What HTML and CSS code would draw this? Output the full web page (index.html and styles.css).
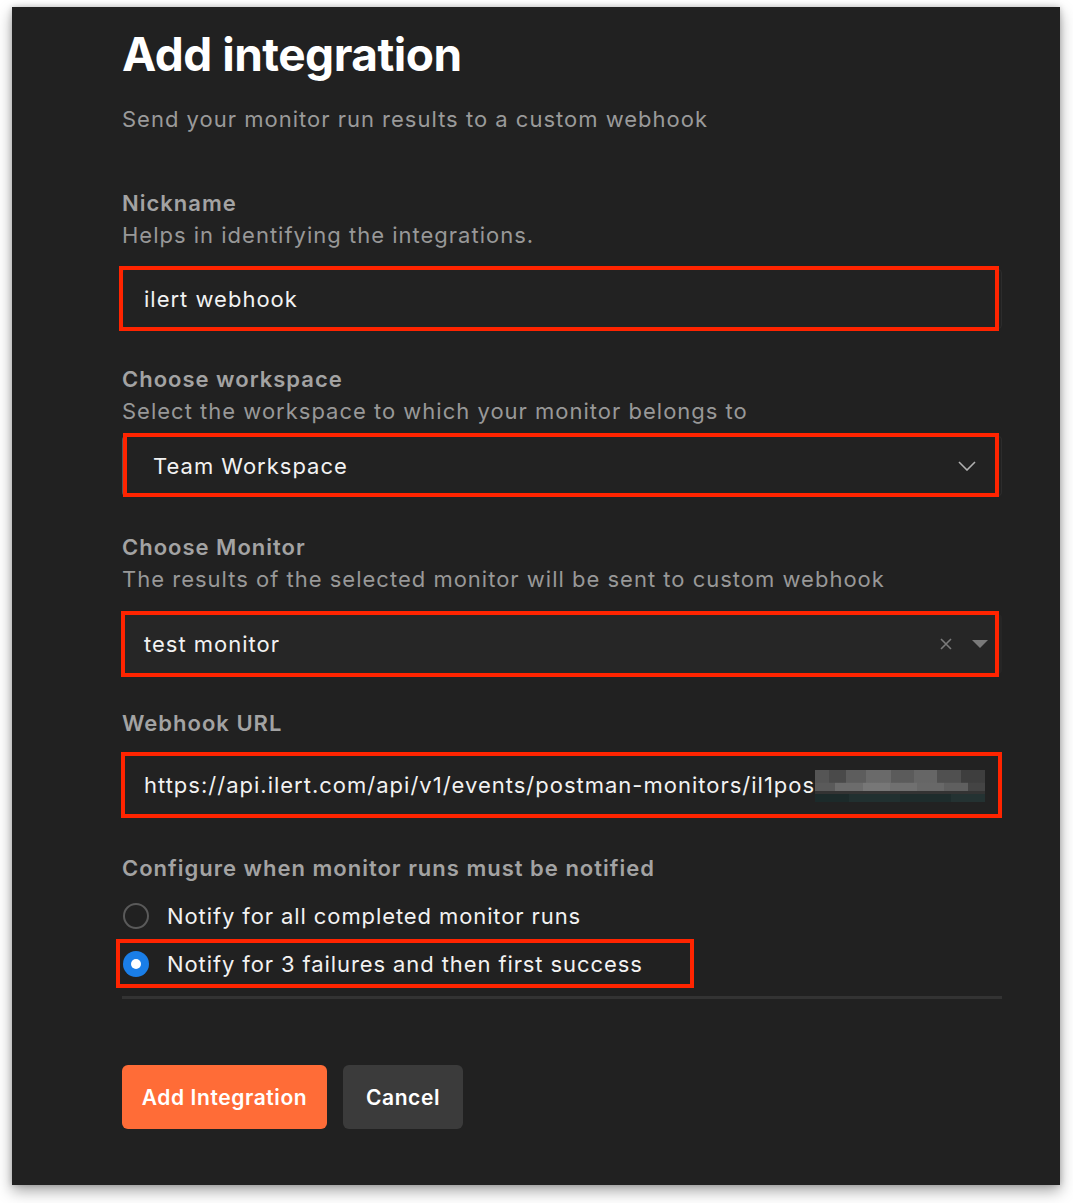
FILE: index.html
```html
<!DOCTYPE html>
<html>
<head>
<meta charset="utf-8">
<link rel="stylesheet" href="styles.css">
</head>
<body>
<div class="panel">
  <h1 class="title">Add integration</h1>
  <p class="subtitle">Send your monitor run results to a custom webhook</p>

  <div class="section s1">
    <div class="label">Nickname</div>
    <div class="desc">Helps in identifying the integrations.</div>
    <div class="field f1"><span class="val">ilert webhook</span></div>
  </div>

  <div class="section s2">
    <div class="label">Choose workspace</div>
    <div class="desc">Select the workspace to which your monitor belongs to</div>
    <div class="field f2 select">
      <span class="val">Team Workspace</span>
      <svg class="chev" width="18" height="10" viewBox="0 0 18 10"><path d="M1 1 L9 9 L17 1" fill="none" stroke="#b0b0b0" stroke-width="1.6"/></svg>
    </div>
  </div>

  <div class="section s3">
    <div class="label">Choose Monitor</div>
    <div class="desc">The results of the selected monitor will be sent to custom webhook</div>
    <div class="field f3 select">
      <span class="val">test monitor</span>
      <svg class="clear" width="12" height="12" viewBox="0 0 12 12"><path d="M1 1 L11 11 M11 1 L1 11" fill="none" stroke="#7a7a7a" stroke-width="1.6"/></svg>
      <svg class="tri" width="16" height="8" viewBox="0 0 16 8"><path d="M0 0 H16 L8 8 Z" fill="#7a7a7a"/></svg>
    </div>
  </div>

  <div class="section s4">
    <div class="label">Webhook URL</div>
    <div class="field f4"><span class="val">https://api.ilert.com/api/v1/events/postman-monitors/il1pos</span><span class="blur"></span></div>
  </div>

  <div class="section s5">
    <div class="label">Configure when monitor runs must be notified</div>
    <div class="radios">
      <div class="radio"><span class="dot"></span><span class="rtext">Notify for all completed monitor runs</span></div>
      <div class="radio checked"><span class="dot"></span><span class="rtext">Notify for 3 failures and then first success</span></div>
    </div>
    <div class="divider"></div>
  </div>

  <div class="actions">
    <button class="btn primary">Add Integration</button>
    <button class="btn secondary">Cancel</button>
  </div>
</div>
</body>
</html>
```

FILE: styles.css
```css
html, body {
  margin: 0;
  padding: 0;
  background: #ffffff;
}
body {
  font-family: Inter, "Noto Sans", sans-serif;
  width: 1073px;
  height: 1203px;
  overflow: hidden;
}
.panel {
  margin: 7px 0 0 12px;
  width: 1048px;
  height: 1178px;
  box-sizing: border-box;
  padding: 17px 58px 0 110px;
  background: #212121;
  box-shadow: 0 6px 14px rgba(0,0,0,0.35), 0 0 6px rgba(0,0,0,0.2);
}
.title {
  margin: 0;
  font-size: 46px;
  line-height: 60px;
  font-weight: 700;
  color: #ffffff;
  letter-spacing: -0.5px;
}
.subtitle {
  margin: 19px 0 0;
  font-size: 22px;
  line-height: 32px;
  color: #9a9a9a;
  letter-spacing: 1px;
}
.section { display: flex; flex-direction: column; }
.s1 { margin-top: 52px; }
.s2 { margin-top: 34px; }
.s3 { margin-top: 35px; }
.s4 { margin-top: 33px; }
.s5 { margin-top: 37px; }
.label {
  font-size: 22px;
  line-height: 32px;
  font-weight: 600;
  color: #a3a3a3;
  letter-spacing: 1px;
}
.desc {
  font-size: 22px;
  line-height: 32px;
  color: #989898;
  letter-spacing: 1px;
}
.field {
  position: relative;
  height: 60px;
  box-sizing: border-box;
  display: flex;
  align-items: center;
  padding-left: 21px;
  background: #222222;
  border: 1px solid #2c2c2c;
  border-radius: 4px;
  font-size: 22px;
  color: #f2f2f2;
  letter-spacing: 1px;
}
.field::after {
  content: "";
  position: absolute;
  border: 4px solid #ff2400;
  pointer-events: none;
}
.f1 { margin-top: 18px; }
.f1::after { top: -4px; left: -4px; right: 2px; bottom: -3px; }
.f2 { margin-top: 9px; padding-left: 28px; border-left: 3px solid #555; }
.f2::after { top: -4px; left: -2px; right: 2px; bottom: -2px; }
.f3 { margin-top: 19px; background: #262626; border-color: #262626; }
.f3::after { top: -4px; left: -2px; right: 2px; bottom: -4px; }
.f4 { margin-top: 16px; }
.f4::after { top: -4px; left: -2px; right: -1px; bottom: -4px; }
.select .val { flex: 1; }
.chev { margin-right: 25px; }
.clear { margin-right: 20px; }
.tri { margin-right: 13px; }
.blur {
  display: inline-block;
  width: 170px;
  height: 32px;
  margin-top: 2px;
  background:
    linear-gradient(90deg, #555 0 8%, #4a4a4a 8% 18%, #5d5d5d 18% 30%, #6a6a6a 30% 45%, #5b5b5b 45% 58%, #666 58% 72%, #505050 72% 86%, #3e3e3e 86% 100%) top / 100% 40% no-repeat,
    linear-gradient(90deg, #5a5a5a 0 12%, #6c6c6c 12% 28%, #777 28% 44%, #707070 44% 60%, #686868 60% 76%, #5f5f5f 76% 90%, #444 90% 100%) center / 100% 35% no-repeat,
    linear-gradient(90deg, #1c2a2a 0 20%, #213030 20% 50%, #1e2c2c 50% 80%, #243232 80% 100%) bottom / 100% 25% no-repeat;
  background-color: #333;
}
.radios {
  margin-top: 8px;
  display: flex;
  flex-direction: column;
}
.radio {
  position: relative;
  height: 48px;
  display: flex;
  align-items: center;
  font-size: 22px;
  color: #f2f2f2;
  letter-spacing: 0.9px;
}
.dot {
  width: 26px;
  height: 26px;
  box-sizing: border-box;
  border: 2px solid #5a5a5a;
  border-radius: 50%;
  margin-left: 1px;
  margin-right: 18px;
  position: relative;
}
.checked .dot {
  border: none;
  background: #1a7ee8;
}
.checked .dot::before {
  content: "";
  position: absolute;
  width: 10px;
  height: 10px;
  border-radius: 50%;
  background: #ffffff;
  left: 8px;
  top: 8px;
}
.checked::after {
  content: "";
  position: absolute;
  top: -1px;
  bottom: 0;
  left: -6px;
  width: 578px;
  box-sizing: border-box;
  border: 4px solid #ff2400;
}
.divider {
  margin-top: 8px;
  height: 3px;
  background: #333333;
}
.actions {
  margin-top: 66px;
  display: flex;
  gap: 16px;
}
.btn {
  height: 64px;
  border: none;
  border-radius: 6px;
  font-family: Inter, "Noto Sans", sans-serif;
  font-size: 21px;
  font-weight: 600;
  color: #ffffff;
  padding: 0;
  letter-spacing: 0.6px;
}
.primary { background: #ff6c37; width: 205px; }
.secondary { background: #3b3b3b; width: 120px; }
```
